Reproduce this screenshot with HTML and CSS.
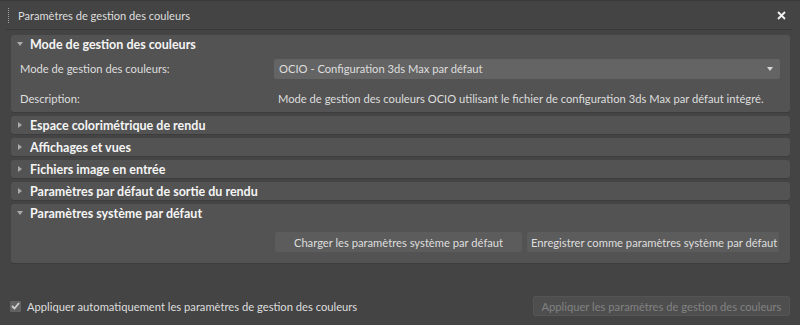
FILE: index.html
```html
<!DOCTYPE html>
<html lang="fr">
<head>
    <meta charset="utf-8">
    <title>Paramètres de gestion des couleurs</title>
    <link rel="stylesheet" href="styles.css">
</head>
<body>
    <div class="window">
        <div class="titlebar">
            <span class="grip"></span>
            <span class="title">Paramètres de gestion des couleurs</span>
            <svg class="close" width="9" height="9" viewBox="0 0 9 9">
                <path d="M1 1 L8 8 M8 1 L1 8" stroke="#f2f2f2" stroke-width="1.8"/>
            </svg>
        </div>

        <div class="content">
            <div class="rollout">
                <div class="rollout__head"><span class="tri tri--open"></span>Mode de gestion des couleurs</div>
                <div class="rollout__body">
                    <div class="row">
                        <span class="row__label">Mode de gestion des couleurs:</span>
                        <div class="combo">
                            <span>OCIO - Configuration 3ds Max par défaut</span>
                            <span class="combo__arrow"></span>
                        </div>
                    </div>
                    <div class="row row--desc">
                        <span class="row__label">Description:</span>
                        <span class="row__value">Mode de gestion des couleurs OCIO utilisant le fichier de configuration 3ds Max par défaut intégré.</span>
                    </div>
                </div>
            </div>

            <div class="rollout rollout--closed">
                <div class="rollout__head"><span class="tri"></span>Espace colorimétrique de rendu</div>
            </div>
            <div class="rollout rollout--closed">
                <div class="rollout__head"><span class="tri"></span>Affichages et vues</div>
            </div>
            <div class="rollout rollout--closed">
                <div class="rollout__head"><span class="tri"></span>Fichiers image en entrée</div>
            </div>
            <div class="rollout rollout--closed">
                <div class="rollout__head"><span class="tri"></span>Paramètres par défaut de sortie du rendu</div>
            </div>

            <div class="rollout">
                <div class="rollout__head"><span class="tri tri--open"></span>Paramètres système par défaut</div>
                <div class="rollout__body buttons">
                    <button class="btn btn--load">Charger les paramètres système par défaut</button>
                    <button class="btn btn--save">Enregistrer comme paramètres système par défaut</button>
                </div>
            </div>
        </div>

        <div class="footer">
            <label class="check">
                <span class="check__box">
                    <svg width="9" height="8" viewBox="0 0 9 8">
                        <path d="M1 4 L3.5 6.5 L8 1" stroke="#cfcfcf" stroke-width="1.8" fill="none"/>
                    </svg>
                </span>
                Appliquer automatiquement les paramètres de gestion des couleurs
            </label>
            <button class="btn btn--apply" disabled>Appliquer les paramètres de gestion des couleurs</button>
        </div>
    </div>
</body>
</html>
```

FILE: styles.css
```css
/* Colors */
:root {
    --window-bg: rgb(68, 68, 68);
    --title-line: rgb(56, 56, 56);
    --panel-bg: rgb(83, 83, 83);
    --panel-edge: rgb(60, 60, 60);
    --combo-bg: rgb(100, 100, 100);
    --btn-bg: rgb(92, 92, 92);
    --text: rgb(222, 222, 222);
    --text-strong: rgb(245, 245, 245);
    --text-disabled: rgb(130, 130, 130);
    --tri: rgb(170, 170, 170);
}

html, body {
    margin: 0;
    padding: 0;
    background-color: var(--window-bg);
    font-family: Lato, "Liberation Sans", sans-serif;
    font-size: 11.2px;
    color: var(--text);
}

.window {
    width: 800px;
    height: 325px;
    box-sizing: border-box;
    border-top: 1px solid rgb(58, 58, 58);
    display: flex;
    flex-direction: column;
}

.titlebar {
    height: 27px;
    margin: 1px 8px 0 6px;
    display: flex;
    align-items: center;
    border-bottom: 1px solid var(--title-line);
}

.grip {
    width: 1px;
    height: 16px;
    margin: 0 9px 0 2px;
    background-image: linear-gradient(rgb(160, 160, 160) 50%, transparent 50%);
    background-size: 1px 2px;
}

.title {
    flex: 1;
    color: var(--text);
    font-size: 11.1px;
}

.close {
    margin-right: 6px;
}

.content {
    padding: 5px 10px 0 11px;
    display: flex;
    flex-direction: column;
    gap: 4px;
}

.rollout {
    background-color: var(--panel-bg);
    border-radius: 3px;
    box-shadow: 0 1px 0 var(--panel-edge);
}

.rollout__head {
    height: 18px;
    display: flex;
    align-items: center;
    font-weight: bold;
    font-size: 12.5px;
    color: var(--text-strong);
    white-space: nowrap;
}

.tri {
    width: 0;
    height: 0;
    margin: 0 8px 0 7px;
    border-top: 3px solid transparent;
    border-bottom: 3px solid transparent;
    border-left: 4px solid var(--tri);
}

.tri--open {
    margin: 0 7px 0 6px;
    border-left: 3px solid transparent;
    border-right: 3px solid transparent;
    border-top: 4px solid var(--tri);
    border-bottom: 0;
}

.rollout__body {
    padding: 0 10px 0 9px;
}

.row {
    display: flex;
    align-items: center;
    height: 31px;
    white-space: nowrap;
}

.row--desc {
    height: 28px;
}

.row__label {
    width: 256px;
    flex-shrink: 0;
}

.row__value {
    margin-left: 2px;
}

.combo {
    flex: 1;
    height: 20px;
    margin-left: -2px;
    padding: 0 7px 0 5px;
    display: flex;
    align-items: center;
    justify-content: space-between;
    background-color: var(--combo-bg);
    border-radius: 2px;
}

.combo__arrow {
    width: 0;
    height: 0;
    border-left: 3px solid transparent;
    border-right: 3px solid transparent;
    border-top: 4px solid rgb(215, 215, 215);
}

.buttons {
    display: flex;
    justify-content: flex-end;
    gap: 5px;
    padding: 10px 11px 11px 0;
}

.btn {
    height: 20px;
    padding: 0 4px;
    font-family: inherit;
    font-size: 11.2px;
    color: var(--text);
    background-color: var(--btn-bg);
    border: 0;
    border-radius: 2px;
    white-space: nowrap;
}

.btn--load {
    width: 247px;
}

.btn--save {
    width: 252px;
}

.footer {
    margin-top: auto;
    padding: 0 10px 9px 10px;
    display: flex;
    align-items: center;
    justify-content: space-between;
    white-space: nowrap;
}

.check {
    display: flex;
    align-items: center;
    gap: 6px;
}

.check__box {
    width: 11px;
    height: 11px;
    display: flex;
    align-items: center;
    justify-content: center;
    background-color: rgb(98, 98, 98);
    border-radius: 1px;
}

.btn--apply {
    width: 257px;
    color: var(--text-disabled);
    background-color: rgb(78, 78, 78);
    border: 1px solid rgb(84, 84, 84);
}
```
